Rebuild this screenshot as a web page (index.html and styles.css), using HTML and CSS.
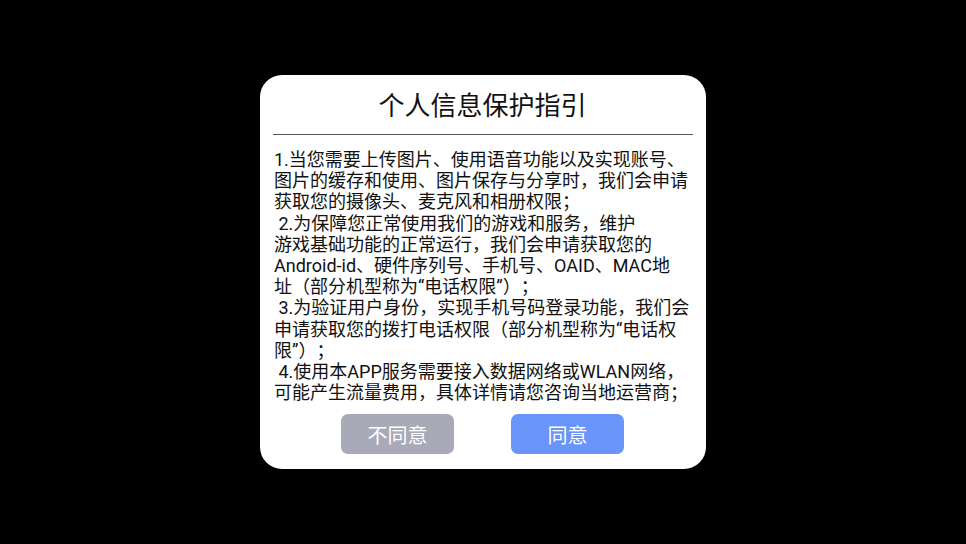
FILE: index.html
```html
<!DOCTYPE html>
<html lang="zh">
<head>
<meta charset="utf-8">
<link rel="stylesheet" href="styles.css">
</head>
<body>
<div class="screen">
  <div class="dialog">
    <div class="title">个人信息保护指引</div>
    <div class="rule"></div>
    <div class="body">1.当您需要上传图片、使用语音功能以及实现账号、<br>图片的缓存和使用、图片保存与分享时，我们会申请<br>获取您的摄像头、麦克风和相册权限；<br>&nbsp;2.为保障您正常使用我们的游戏和服务，维护<br>游戏基础功能的正常运行，我们会申请获取您的<br>Android-id、硬件序列号、手机号、OAID、MAC地<br>址（部分机型称为“电话权限”）；<br>&nbsp;3.为验证用户身份，实现手机号码登录功能，我们会<br>申请获取您的拨打电话权限（部分机型称为“电话权<br>限”）；<br>&nbsp;4.使用本APP服务需要接入数据网络或WLAN网络，<br>可能产生流量费用，具体详情请您咨询当地运营商；</div>
    <div class="actions">
      <button class="btn btn-no">不同意</button>
      <button class="btn btn-yes">同意</button>
    </div>
  </div>
</div>
</body>
</html>
```
FILE: styles.css
```css
html, body {
  margin: 0;
  padding: 0;
  background: #000;
}
body {
  width: 966px;
  height: 544px;
  overflow: hidden;
  font-family: Roboto, "Noto Sans CJK SC", sans-serif;
  text-spacing-trim: space-all;
}
.screen {
  width: 966px;
  height: 544px;
  display: flex;
  justify-content: center;
  padding-top: 75px;
  box-sizing: border-box;
}
.dialog {
  width: 446px;
  height: 394px;
  background: #fff;
  border-radius: 22px;
  display: flex;
  flex-direction: column;
  padding: 0 14px 0 13px;
  box-sizing: border-box;
}
.title {
  height: 59px;
  line-height: 63px;
  text-align: center;
  font-size: 26px;
  color: #111;
}
.rule {
  height: 1px;
  margin-right: -1px;
  background: #555;
}
.body {
  margin-top: 14px;
  padding-left: 1px;
  font-size: 18px;
  line-height: 21.2px;
  color: #111;
  white-space: nowrap;
}
.actions {
  display: flex;
  justify-content: center;
  gap: 57px;
  margin-top: 11px;
}
.btn {
  width: 113px;
  height: 40px;
  border: none;
  border-radius: 7px;
  color: #fff;
  font-family: Roboto, "Noto Sans CJK SC", sans-serif;
  font-size: 20px;
  padding: 0;
  text-spacing-trim: space-all;
}
.btn-no {
  background: #a8aab8;
}
.btn-yes {
  background: #6994f9;
}
```
